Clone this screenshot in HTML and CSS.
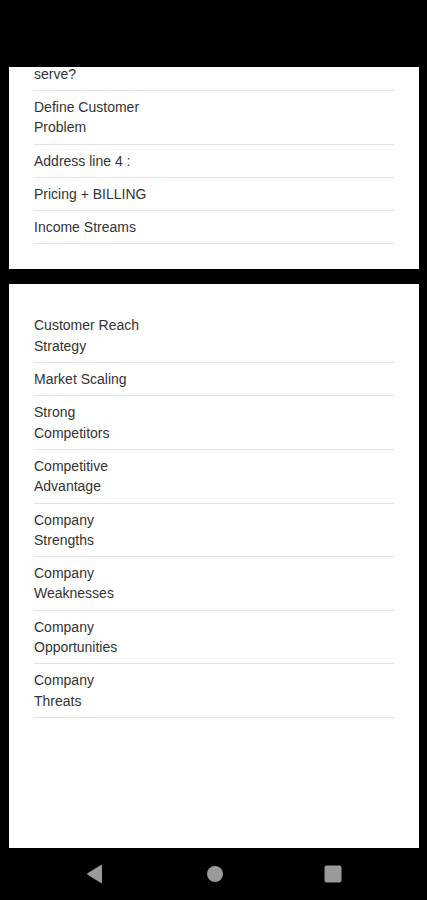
FILE: index.html
```html
<!DOCTYPE html>
<html>
<head>
<meta charset="utf-8">
<link rel="stylesheet" href="styles.css">
</head>
<body>
<div class="screen">
  <div class="topbar"></div>
  <main class="scroll">
    <section class="card card-first">
      <div class="row row-partial"><span class="label">serve?</span></div>
      <div class="row"><span class="label">Define Customer Problem</span></div>
      <div class="row"><span class="label">Address line 4 :</span></div>
      <div class="row"><span class="label">Pricing + BILLING</span></div>
      <div class="row"><span class="label">Income Streams</span></div>
    </section>
    <section class="card card-second">
      <div class="row"><span class="label">Customer Reach Strategy</span></div>
      <div class="row"><span class="label">Market Scaling</span></div>
      <div class="row"><span class="label">Strong Competitors</span></div>
      <div class="row"><span class="label">Competitive Advantage</span></div>
      <div class="row"><span class="label">Company Strengths</span></div>
      <div class="row"><span class="label">Company Weaknesses</span></div>
      <div class="row"><span class="label">Company Opportunities</span></div>
      <div class="row"><span class="label">Company<br>Threats</span></div>
    </section>
  </main>
  <nav class="navbar">
    <svg class="nav-icon" width="18" height="20" viewBox="0 0 18 20"><path d="M16 1.5 L16 18.5 Q16 19.5 15 19 L1.5 10.8 Q0.6 10 1.5 9.2 L15 1 Q16 0.5 16 1.5 Z" fill="#9a9a9a"/></svg>
    <svg class="nav-icon" width="18" height="18" viewBox="0 0 18 18"><circle cx="9" cy="9" r="8" fill="#9a9a9a"/></svg>
    <svg class="nav-icon" width="18" height="18" viewBox="0 0 18 18"><rect x="0.5" y="0.5" width="17" height="17" rx="2" fill="#9a9a9a"/></svg>
  </nav>
</div>
</body>
</html>
```

FILE: styles.css
```css
* { box-sizing: border-box; }
html, body {
  margin: 0;
  padding: 0;
  background: #000;
}
.screen {
  width: 427px;
  height: 900px;
  display: flex;
  flex-direction: column;
  background: #000;
  font-family: "Liberation Sans", Arial, sans-serif;
}
.topbar {
  height: 67px;
  flex: none;
  background: #000;
}
.scroll {
  flex: 1;
  display: flex;
  flex-direction: column;
  gap: 15px;
  padding: 0 8px 0 9px;
}
.card {
  background: #fff;
  padding: 25px 25px 26px;
  flex: none;
}
.card-first {
  padding-top: 0;
  padding-bottom: 25px;
}
.card-second {
  flex: 1;
}
.row {
  padding: 6px 0;
  border-bottom: 1px solid #e2e2e2;
}
.label {
  display: block;
  width: 114px;
  font-size: 14px;
  line-height: 20.3px;
  color: #333;
}
.row-partial {
  padding: 1px 0 9px;
}
.row-partial .label {
  line-height: 13px;
}
.navbar {
  height: 52px;
  flex: none;
  display: flex;
  align-items: center;
  padding-left: 86px;
}
.nav-icon {
  display: block;
}
.nav-icon:nth-child(1) { margin-right: 102px; }
.nav-icon:nth-child(2) { margin-right: 100px; }
```
